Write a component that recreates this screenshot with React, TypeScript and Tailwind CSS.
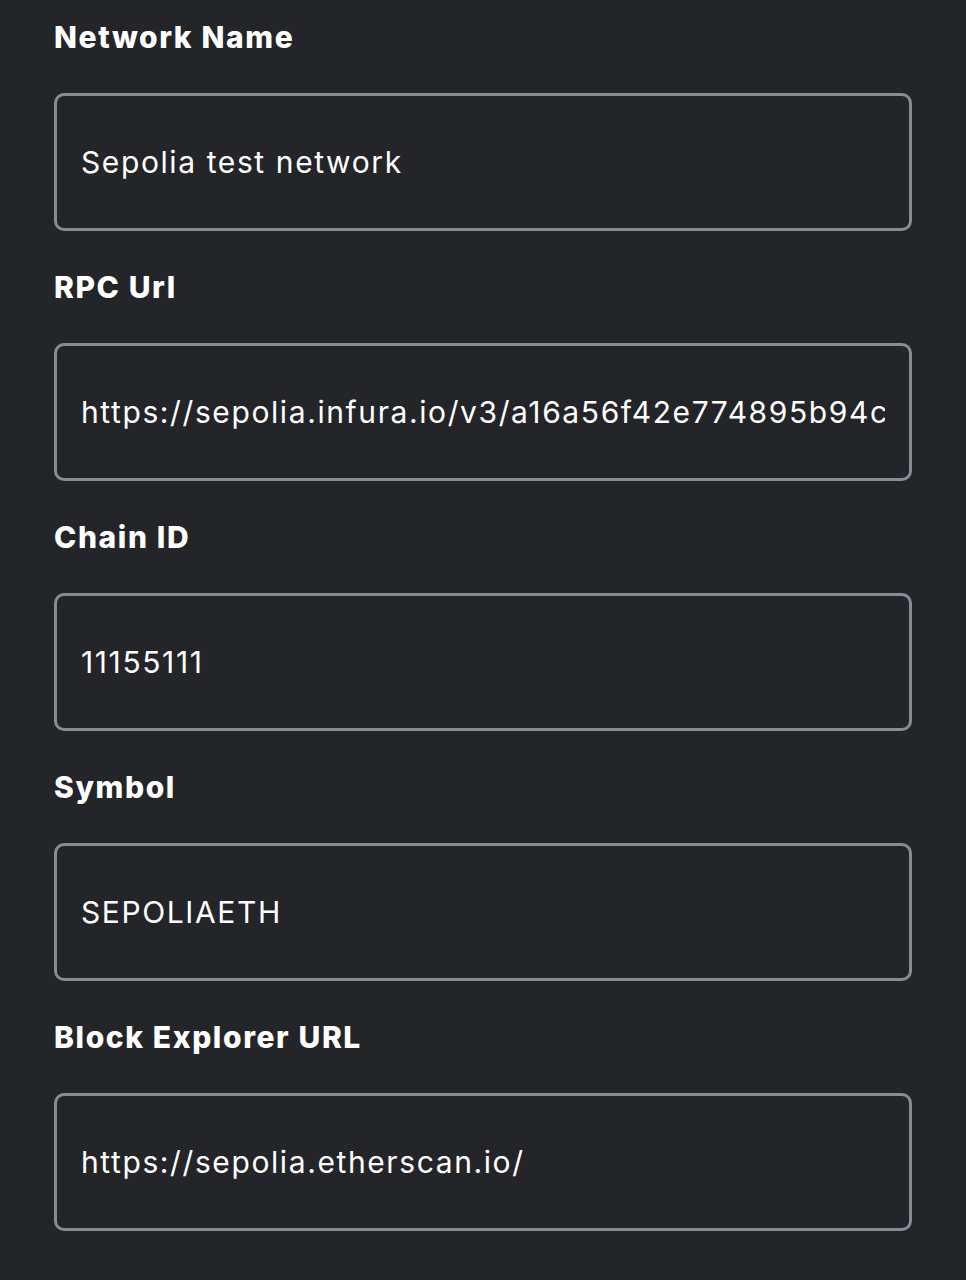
const fields = [
  { label: "Network Name", value: "Sepolia test network" },
  { label: "RPC Url", value: "https://sepolia.infura.io/v3/a16a56f42e774895b94c" },
  { label: "Chain ID", value: "11155111" },
  { label: "Symbol", value: "SEPOLIAETH" },
  { label: "Block Explorer URL", value: "https://sepolia.etherscan.io/" },
];

export default function App() {
  return (
    <div className="min-h-[1280px] w-[966px] bg-[#232528] px-[54px] pt-[19px] font-['Inter',sans-serif] text-white">
      {fields.map((f) => (
        <div key={f.label} className="mb-[38px] flex flex-col gap-[38px]">
          <label className="h-[36px] text-[30px] font-extrabold leading-[36px] tracking-[1.6px]">{f.label}</label>
          <input
            readOnly
            defaultValue={f.value}
            className="h-[138px] w-full rounded-[10px] border-[3px] border-[#868d96] bg-transparent px-[24px] text-[30px] font-normal tracking-[1.6px] text-white outline-none"
          />
        </div>
      ))}
    </div>
  );
}
